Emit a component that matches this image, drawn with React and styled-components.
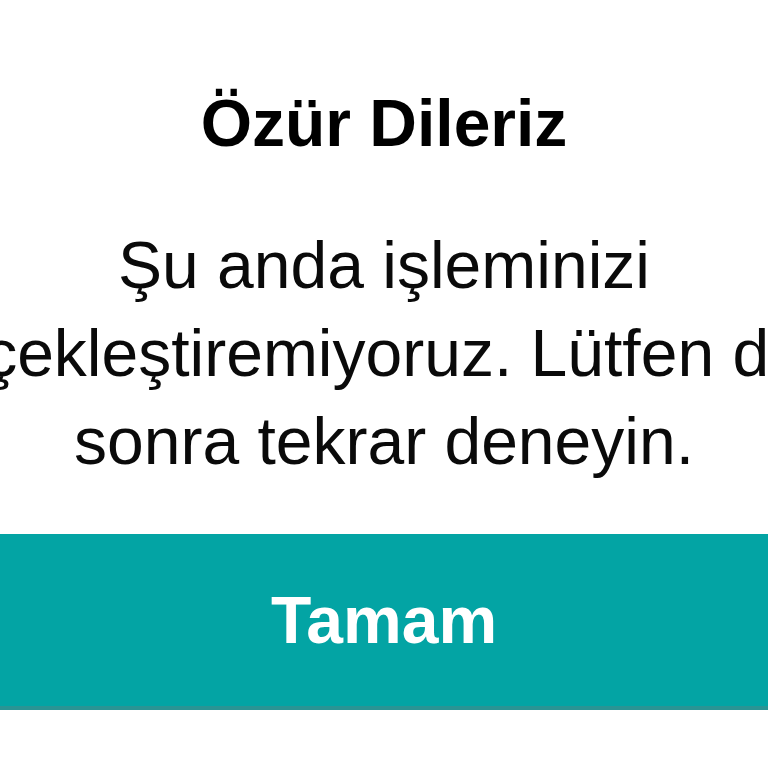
import React from "react";
import styled, { createGlobalStyle } from "styled-components";

const GlobalStyle = createGlobalStyle`
  html, body {
    margin: 0;
    padding: 0;
    background: #ffffff;
  }
  body {
    font-family: "Liberation Sans", Arial, Helvetica, sans-serif;
  }
`;

const Screen = styled.div`
  width: 768px;
  height: 768px;
  overflow: hidden;
  display: flex;
  flex-direction: column;
  align-items: center;
  background: #ffffff;
`;

const Title = styled.h1`
  margin: 83px 0 0;
  font-size: 66px;
  line-height: 80px;
  font-weight: 700;
  color: #000;
  text-align: center;
`;

const MessageWrap = styled.div`
  width: 100%;
  margin-top: 58px;
  display: flex;
  justify-content: center;
`;

const Message = styled.p`
  flex-shrink: 0;
  width: 1040px;
  margin: 0;
  font-size: 66px;
  line-height: 88px;
  font-weight: 400;
  color: #0a0a0a;
  text-align: center;
`;

const OkButton = styled.button`
  flex-shrink: 0;
  width: 100%;
  height: 176px;
  margin-top: 49px;
  padding: 0;
  border: none;
  border-bottom: 4px solid #2a9494;
  background: #03a4a4;
  color: #ffffff;
  font-family: inherit;
  font-size: 66px;
  font-weight: 700;
  display: flex;
  align-items: center;
  justify-content: center;
  cursor: pointer;
`;

function App() {
  return (
    <>
      <GlobalStyle />
      <Screen>
        <Title>Özür Dileriz</Title>
        <MessageWrap>
          <Message>
            Şu anda işleminizi gerçekleştiremiyoruz. Lütfen daha sonra tekrar
            deneyin.
          </Message>
        </MessageWrap>
        <OkButton>Tamam</OkButton>
      </Screen>
    </>
  );
}

export default App;
